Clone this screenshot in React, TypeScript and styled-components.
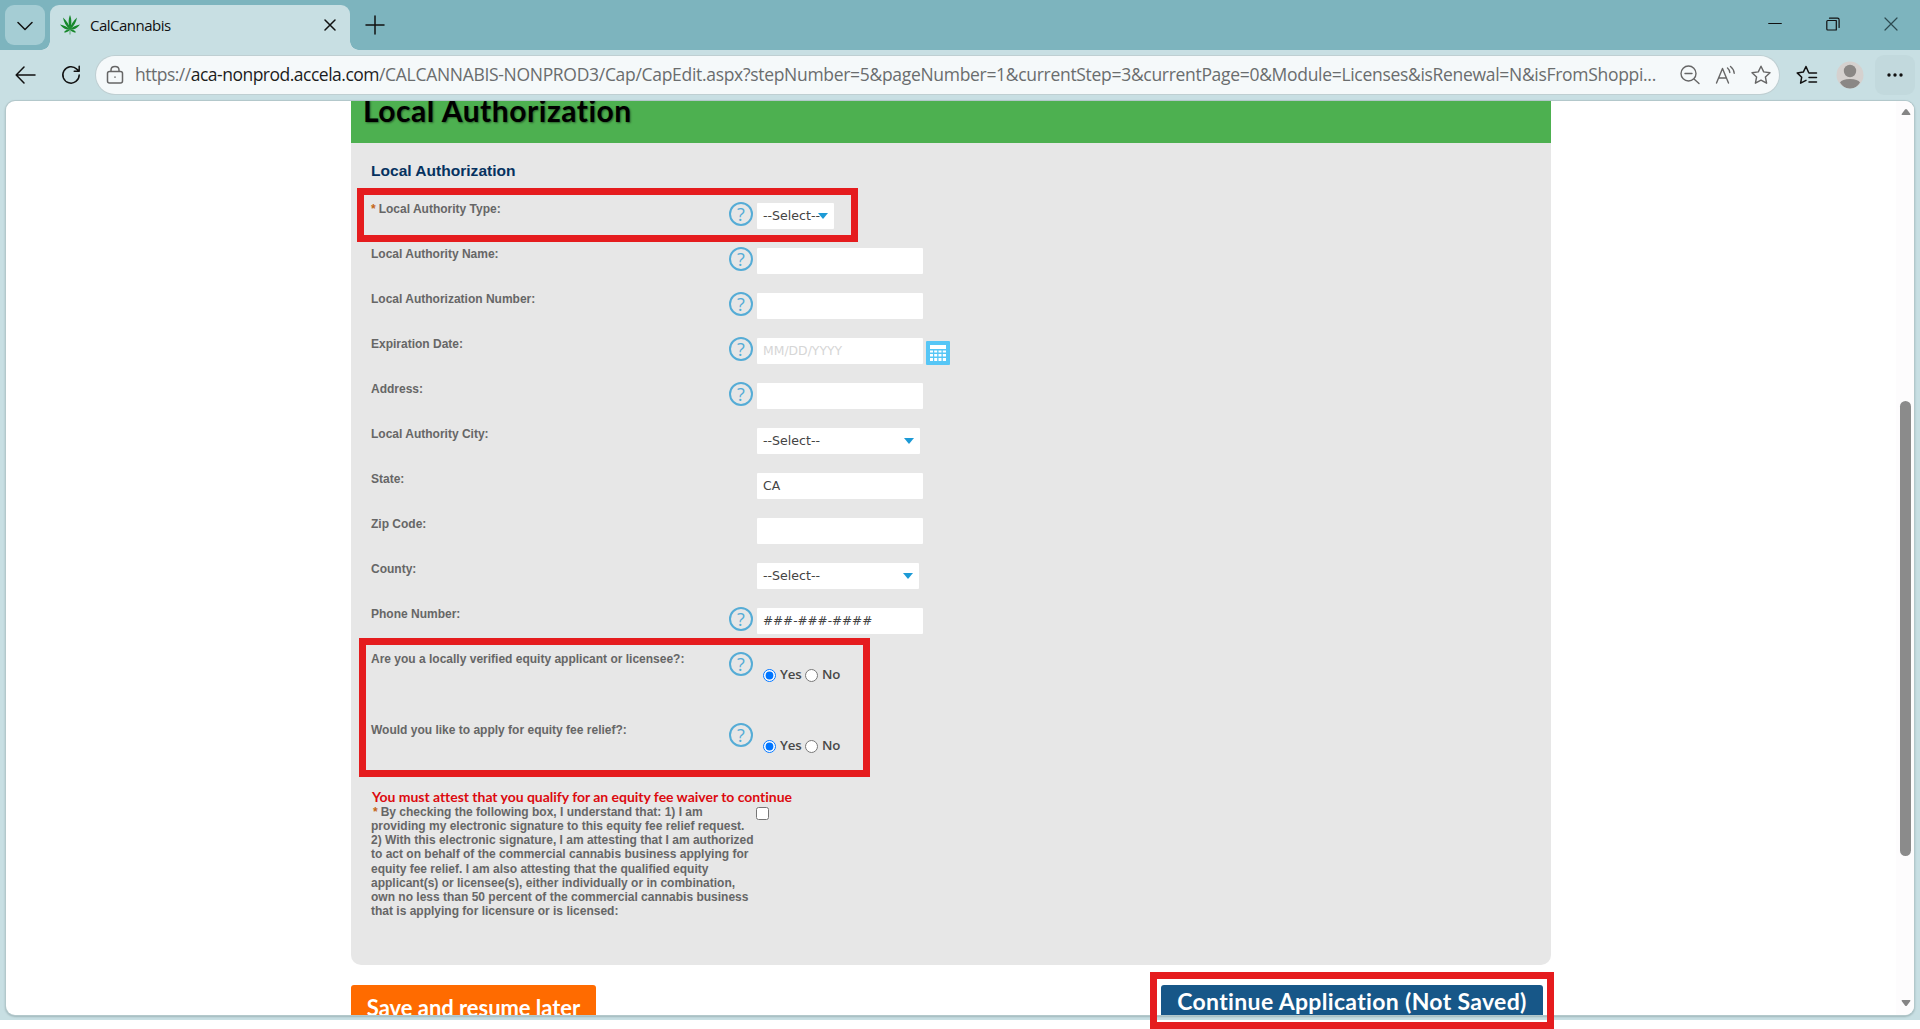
import React from 'react';
import styled, { createGlobalStyle, css } from 'styled-components';

const Global = createGlobalStyle`
  *, *::before, *::after { box-sizing: border-box; }
  body { margin: 0; background: #fff; overflow: hidden; font-family: "Liberation Sans", Arial, sans-serif; }
`;

const Screen = styled.div`
  position: relative;
  width: 1920px;
  height: 1029px;
  overflow: hidden;
  background: #fff;
`;

const BrowserWindow = styled.div`
  display: flex;
  flex-direction: column;
  width: 100%;
  height: 1020px;
  background: #c8dfe3;
`;

const TabStrip = styled.header`
  display: flex;
  height: 50px;
  padding: 5px 0 0 5px;
  background: #7db4be;
`;

const TabMenu = styled.button`
  display: grid;
  place-items: center;
  width: 40px;
  height: 40px;
  margin-right: 5px;
  padding: 2px 0 0;
  border: 0;
  border-radius: 9px;
  background: #a5cdd4;
`;

const Tab = styled.div`
  position: relative;
  display: flex;
  align-items: center;
  width: 300px;
  height: 45px;
  padding: 0 14px 5px 10px;
  border-radius: 9px 9px 0 0;
  background: #c8dfe3;

  &::before, &::after {
    content: '';
    position: absolute;
    bottom: 0;
    width: 9px;
    height: 9px;
  }
  &::before { left: -9px; background: radial-gradient(circle at 0 0, transparent 8.5px, #c8dfe3 9px); }
  &::after { right: -9px; background: radial-gradient(circle at 100% 0, transparent 8.5px, #c8dfe3 9px); }
`;

const TabTitle = styled.span`
  flex: 1;
  margin-left: 10px;
  font: 400 15px/20px "Open Sans", sans-serif;
  letter-spacing: -0.5px;
  color: #111;
`;

const StripIcons = styled.div<{ $end?: boolean }>`
  display: flex;
  align-items: flex-start;
  ${p => p.$end
    ? css`margin-left: auto; gap: 44px; padding: 12px 22px 0 0;`
    : css`padding: 10px 0 0 15px;`}
`;

const Toolbar = styled.div`
  display: flex;
  align-items: center;
  height: 51px;
  padding: 0 5px 1px 15px;
`;

const NavIcons = styled.div`
  display: flex;
  align-items: center;
  gap: 25px;
  width: 81px;
`;

const AddressBar = styled.div`
  display: flex;
  align-items: center;
  width: 1683px;
  height: 38px;
  padding: 0 8px 0 10px;
  border-radius: 19px;
  background: #f5f9fa;
  box-shadow: 0 0 0 1px #bfcfd2;
`;

const Url = styled.div`
  flex: 1;
  margin: -2px 0 0 11px;
  white-space: nowrap;
  font: 400 17.5px/24px "Open Sans", sans-serif;
  letter-spacing: -0.305px;
  color: #6a6d6e;
`;

const Origin = styled.span<{ $strong?: boolean }>`
  letter-spacing: -0.5px;
  color: ${p => (p.$strong ? '#1c1d1d' : 'inherit')};
`;

const AddressIcons = styled.div`
  display: flex;
  align-items: center;
  gap: 15px;
`;

const ToolbarEnd = styled.div`
  display: flex;
  align-items: center;
  margin-left: auto;
`;

const AvatarSlot = styled.div`
  display: flex;
  margin: 0 11px 0 18px;
`;

const MoreButton = styled.div`
  display: grid;
  place-items: center;
  width: 40px;
  height: 40px;
  border-radius: 9px;
  background: #c2d9dd;
`;

const Viewport = styled.main`
  display: flex;
  width: 1908px;
  height: 914px;
  margin-left: 6px;
  border-radius: 9px;
  overflow: hidden;
  background: #fff;
  box-shadow: 0 0 0 1px #b3c8cb, 0 1px 2px 1px #9fb6ba;
`;

const Page = styled.div`
  flex: 1;
  padding-left: 345px;
`;

const Content = styled.div`
  width: 1200px;
`;

const Banner = styled.h1`
  height: 42px;
  margin: 0;
  padding-left: 12px;
  background: #4db050;
  font: 700 30px/18px Lato, sans-serif;
  letter-spacing: 0.53px;
  color: #000;
  text-shadow: 1px 1px 2px rgba(0, 0, 0, 0.45);
`;

const Panel = styled.section`
  height: 822px;
  padding: 18px 0 0 20px;
  border-radius: 0 0 10px 10px;
  background: #e7e7e7;
`;

const PanelTitle = styled.h2`
  margin: 0 0 22px;
  font: 700 15.55px/20px "Liberation Sans", Arial, sans-serif;
  color: #06325f;
`;

const Row = styled.div<{ $tall?: boolean }>`
  display: grid;
  grid-template-columns: 358px 28px 1fr;
  align-items: start;
  height: ${p => (p.$tall ? 71 : 45)}px;
`;

const Label = styled.label`
  font: 700 12px/12px "Liberation Sans", Arial, sans-serif;
  color: #666;
`;

const Star = styled.span<{ $inset?: boolean }>`
  margin: 0 3px 0 ${p => (p.$inset ? 2 : 0)}px;
  color: #c4661a;
`;

const FieldCell = styled.div`
  display: flex;
  grid-column: 3;
`;

const Field = styled.input`
  width: 166px;
  height: 26px;
  padding: 0 6px 1px;
  border: 0;
  border-radius: 1px;
  outline: 0;
  background: #fff;
  font: 400 12.4px "DejaVu Sans", sans-serif;
  color: #444;
  &::placeholder { color: #d6d6d6; opacity: 1; }
  &[type='tel'] { font-size: 12px; }
`;

const SelectBox = styled.div<{ $width: number }>`
  position: relative;
  width: ${p => p.$width}px;
  height: 26px;
  padding-left: 6px;
  border-radius: 1px;
  background: #fff;
  font: 400 12.6px/26px "DejaVu Sans", sans-serif;
  color: #444;
`;

const Caret = styled.span`
  position: absolute;
  right: 6px;
  top: 10px;
  border: 5px solid transparent;
  border-top: 6px solid #1c9ad6;
  border-bottom: 0;
`;

const CalendarButton = styled.div`
  width: 24px;
  height: 24px;
  margin: 3px 0 0 3px;
`;

const Radios = styled.div`
  display: flex;
  align-items: center;
  height: 16px;
  margin: 13px 0 0 6px;
  font: 600 13.3px/16px "Open Sans", sans-serif;
  color: #484848;
`;

const Radio = styled.input`
  width: 13px;
  height: 13px;
  margin: 2px 4px 0 0;
`;

const RadioText = styled.span`
  width: 25px;
  margin-top: -1px;
  letter-spacing: -0.2px;
`;

const Attest = styled.div`
  display: grid;
  grid-template-columns: 384px 1fr;
  column-gap: 1px;
`;

const Warning = styled.p`
  grid-column: 1 / -1;
  margin: -7px 0 0 1px;
  font: 700 14px/17px Lato, sans-serif;
  letter-spacing: -0.03px;
  color: #dc0a0f;
`;

const Statement = styled.p`
  margin: 0;
  font: 700 12px/14.15px "Liberation Sans", Arial, sans-serif;
  color: #666;
`;

const Check = styled.input`
  width: 13px;
  height: 13px;
  margin: 2px 0 0;
`;

const Actions = styled.div`
  display: flex;
  justify-content: space-between;
  margin-top: 20px;
  padding-right: 8px;
`;

const Action = styled.button<{ $primary?: boolean }>`
  width: ${p => (p.$primary ? 382 : 245)}px;
  height: 44px;
  padding: ${p => (p.$primary ? '0 0 13px' : '1px 0 0')};
  border: 0;
  border-radius: 3px;
  background: ${p => (p.$primary ? '#175788' : '#ff6b00')};
  font: 700 ${p => (p.$primary ? 23 : 22)}px/30px Lato, sans-serif;
  letter-spacing: ${p => (p.$primary ? 0.33 : -0.05)}px;
  color: #fff;
  white-space: nowrap;
`;

const Scrollbar = styled.div`
  display: flex;
  flex-direction: column;
  align-items: center;
  width: 18px;
  padding: 7px 0 8px 1px;
  background: #fdfcfd;
`;

const Thumb = styled.div`
  width: 11px;
  height: 455px;
  margin: 285px 0 auto;
  border-radius: 6px;
  background: #8b8b8b;
`;

const Highlight = styled.div<{ $x: number; $y: number; $w: number; $h: number }>`
  position: absolute;
  left: ${p => p.$x}px;
  top: ${p => p.$y}px;
  width: ${p => p.$w}px;
  height: ${p => p.$h}px;
  border: 7px solid #e51c1e;
`;

const HelpMark = styled.span`
  display: grid;
  place-items: center;
  width: 24px;
  height: 24px;
  margin-top: -1px;
  border: 2px solid #55acd6;
  border-radius: 50%;
  font: 400 18px/20px "Open Sans", sans-serif;
  color: #55acd6;
`;

const Stroke = ({ w, h, d, c = '#111', s = 1.4 }: { w: number; h: number; d: string; c?: string; s?: number }) => (
  <svg width={w} height={h} viewBox={`0 0 ${w} ${h}`} fill="none" stroke={c} strokeWidth={s} strokeLinecap="round" strokeLinejoin="round">
    <path d={d} />
  </svg>
);

const Leaf = () => (
  <svg width="20" height="20" viewBox="0 0 20 20" fill="#17882c">
    <path d="M10 0C8 4.500 8.500 10 9.700 14h.6C11.500 10 12 4.500 10 0Z" />
    <path d="M3 2.500c.6 4.500 3.200 8.800 6.700 11.800l.5-.7C9 9.500 6.600 5.500 3 2.500ZM17 2.500c-.6 4.500-3.200 8.800-6.700 11.800l-.5-.7C11 9.500 13.400 5.500 17 2.500Z" />
    <path d="M0 9.500c2.500 3.500 5.600 5.200 9.700 5.300v-.7C7.500 11.800 3.800 10.200 0 9.500ZM20 9.500c-2.500 3.500-5.600 5.200-9.700 5.300v-.7c2.200-2.300 5.900-3.900 9.700-4.600Z" />
    <path d="M4 17.200c2.600.6 4.600-.2 5.900-2.600-2.500-.3-4.600.6-5.900 2.600ZM16 17.200c-2.600.6-4.600-.2-5.900-2.600 2.500-.3 4.600.6 5.900 2.600ZM9.700 14h.6v5.500h-.6z" />
  </svg>
);

const Calendar = () => (
  <svg width="24" height="24" viewBox="0 0 24 24">
    <rect width="24" height="24" rx="1" fill="#56c6f6" />
    <path
      fill="#fff"
      d="M4 4h16v4H4zM4 9.500h3v2H4zM8.200 9.500h3v2h-3zM12.500 9.500h3v2h-3zM16.800 9.500H20v2h-3.200zM4 13h3v2.400H4zM8.200 13h3v2.400h-3zM12.500 13h3v2.400h-3zM16.800 13H20v2.400h-3.200zM4 17h3v3H4zM8.200 17h3v3h-3zM12.500 17h3v3h-3zM16.800 17H20v3h-3.200z"
    />
  </svg>
);

const ArrowHead = ({ down }: { down?: boolean }) => (
  <svg width="10" height="8" viewBox="0 0 10 8" fill="#858585">
    <path d={down ? 'M1 1h8q1 .6 0 1.600L6 6.500Q5 7.500 4 6.500L1 2.600Q0 1.600 1 1Z' : 'M1 7h8q1-.6 0-1.600L6 1.500Q5 .5 4 1.500L1 5.400Q0 6.400 1 7Z'} />
  </svg>
);

const Avatar = () => (
  <svg width="28" height="28" viewBox="0 0 28 28">
    <clipPath id="avatar"><circle cx="14" cy="14" r="13.500" /></clipPath>
    <circle cx="14" cy="14" r="13.500" fill="#d5d1cf" />
    <g fill="#8a8785" clipPath="url(#avatar)">
      <circle cx="14" cy="10" r="6.200" />
      <path d="M4 21.500Q6 18 14 18t10 3.500Q20 28 14 28T4 21.500Z" />
    </g>
  </svg>
);

type FieldRow = { label: string; help?: boolean; kind: 'text' | 'tel' | 'select' | 'date'; value?: string; width?: number; required?: boolean };

const fields: FieldRow[] = [
  { label: 'Local Authority Type:', help: true, kind: 'select', width: 77, required: true },
  { label: 'Local Authority Name:', help: true, kind: 'text' },
  { label: 'Local Authorization Number:', help: true, kind: 'text' },
  { label: 'Expiration Date:', help: true, kind: 'date' },
  { label: 'Address:', help: true, kind: 'text' },
  { label: 'Local Authority City:', kind: 'select', width: 163 },
  { label: 'State:', kind: 'text', value: 'CA' },
  { label: 'Zip Code:', kind: 'text' },
  { label: 'County:', kind: 'select', width: 162 },
  { label: 'Phone Number:', help: true, kind: 'tel', value: '###-###-####' },
];

const questions = ['Are you a locally verified equity applicant or licensee?:', 'Would you like to apply for equity fee relief?:'];

const FormRow = ({ label, help, kind, value, width = 163, required }: FieldRow) => (
  <Row>
    <Label>{required && <Star>*</Star>}{label}</Label>
    {help && <HelpMark>?</HelpMark>}
    <FieldCell>
      {kind === 'select'
        ? <SelectBox $width={width}>--Select--<Caret /></SelectBox>
        : <Field type={kind === 'tel' ? 'tel' : 'text'} defaultValue={value} placeholder={kind === 'date' ? 'MM/DD/YYYY' : undefined} />}
      {kind === 'date' && <CalendarButton><Calendar /></CalendarButton>}
    </FieldCell>
  </Row>
);

const STAR = 'M10 1.200l2.700 5.700 6.300.8-4.600 4.300 1.200 6.200L10 15.200l-5.600 3 1.200-6.200L1 7.700l6.300-.8Z';

export default function App() {
  return (
    <Screen>
      <Global />
      <BrowserWindow>
        <TabStrip>
          <TabMenu><Stroke w={16} h={10} d="M1 1.500l7 7 7-7" s={1.500} /></TabMenu>
          <Tab>
            <Leaf />
            <TabTitle>CalCannabis</TabTitle>
            <Stroke w={12} h={12} d="M1 1l10 10M11 1L1 11" s={1.500} />
          </Tab>
          <StripIcons><Stroke w={20} h={20} d="M10 1v18M1 10h18" s={1.500} /></StripIcons>
          <StripIcons $end>
            <Stroke w={14} h={14} d="M.7 6.500h12.600" s={1.200} />
            <Stroke w={14} h={14} d="M1.700 3.500h8.600v9.500H1.700q-.9 0-.9-.9V4.400q0-.9.9-.9zM3.500 1.200h8q1.600 0 1.600 1.600v7.700" s={1.200} />
            <Stroke w={14} h={14} d="M1 1l12 12M13 1L1 13" s={1.200} c="#2c4a50" />
          </StripIcons>
        </TabStrip>
        <Toolbar>
          <NavIcons>
            <Stroke w={21} h={18} d="M20 9H1.500M9 1L1.200 9 9 17" s={1.500} />
            <Stroke w={20} h={20} d="M18.200 10A8.200 8.200 0 1 1 15.800 4.100L18 6M18.200 1.200v5h-5" s={1.500} />
          </NavIcons>
          <AddressBar>
            <Stroke w={18} h={20} d="M3.500 6.500h11q2 0 2 2v7.500q0 2-2 2h-11q-2 0-2-2V8.500q0-2 2-2zM5 6.500V5q0-3.500 4-3.500T13 5v1.500M9 12v.3" c="#666" s={1.500} />
            <Url>
              <Origin>https://</Origin>
              <Origin $strong>aca-nonprod.accela.com</Origin>
              /CALCANNABIS-NONPROD3/Cap/CapEdit.aspx?stepNumber=5&amp;pageNumber=1&amp;currentStep=3&amp;currentPage=0&amp;Module=Licenses&amp;isRenewal=N&amp;isFromShoppi...
            </Url>
            <AddressIcons>
              <Stroke w={20} h={20} d="M16 8.500a7.500 7.500 0 1 1-15 0 7.500 7.500 0 0 1 15 0zM14 14l5 4.500M5 8.500h7" c="#666" />
              <Stroke w={21} h={20} d="M1.500 18L7.500 3.500 13.500 18M3.500 13h8M12.500 3q2 1.700 2.300 4.500M15.500 1.500q3.300 2.500 3.700 6.800" c="#666" />
              <Stroke w={20} h={20} d={STAR} c="#666" />
            </AddressIcons>
          </AddressBar>
          <ToolbarEnd>
            <Stroke w={22} h={20} d="M12.500 7.200L10 1.500 7.300 7.100 1.200 7.900l4.500 4.300-1.100 6 5.400-2.800M13 8h7.500M13 12.500h7.500M13 17h7.500" s={1.500} />
            <AvatarSlot><Avatar /></AvatarSlot>
            <MoreButton>
              <svg width="16" height="4" fill="#111"><circle cx="2" cy="2" r="1.700" /><circle cx="8" cy="2" r="1.700" /><circle cx="14" cy="2" r="1.700" /></svg>
            </MoreButton>
          </ToolbarEnd>
        </Toolbar>
        <Viewport>
          <Page>
            <Content>
              <Banner>Local Authorization</Banner>
              <Panel>
                <PanelTitle>Local Authorization</PanelTitle>
                {fields.map(f => <FormRow key={f.label} {...f} />)}
                {questions.map(q => (
                  <Row key={q} $tall>
                    <Label>{q}</Label>
                    <HelpMark>?</HelpMark>
                    <Radios>
                      <Radio type="radio" name={q} defaultChecked /><RadioText>Yes</RadioText>
                      <Radio type="radio" name={q} /><RadioText>No</RadioText>
                    </Radios>
                  </Row>
                ))}
                <Attest>
                  <Warning>You must attest that you qualify for an equity fee waiver to continue</Warning>
                  <Statement>
                    <Star $inset>*</Star>By checking the following box, I understand that: 1) I am providing my electronic
                    signature to this equity fee relief request. 2) With this electronic signature, I am attesting that I am
                    authorized to act on behalf of the commercial cannabis business applying for equity fee relief. I am also
                    attesting that the qualified equity applicant(s) or licensee(s), either individually or in combination, own no
                    less than 50 percent of the commercial cannabis business that is applying for licensure or is licensed:
                  </Statement>
                  <Check type="checkbox" />
                </Attest>
              </Panel>
              <Actions>
                <Action>Save and resume later</Action>
                <Action $primary>Continue Application (Not Saved)</Action>
              </Actions>
            </Content>
          </Page>
          <Scrollbar><ArrowHead /><Thumb /><ArrowHead down /></Scrollbar>
        </Viewport>
      </BrowserWindow>
      <Highlight $x={357} $y={188} $w={501} $h={54} />
      <Highlight $x={359} $y={638} $w={511} $h={139} />
      <Highlight $x={1150} $y={972} $w={404} $h={57} />
    </Screen>
  );
}
